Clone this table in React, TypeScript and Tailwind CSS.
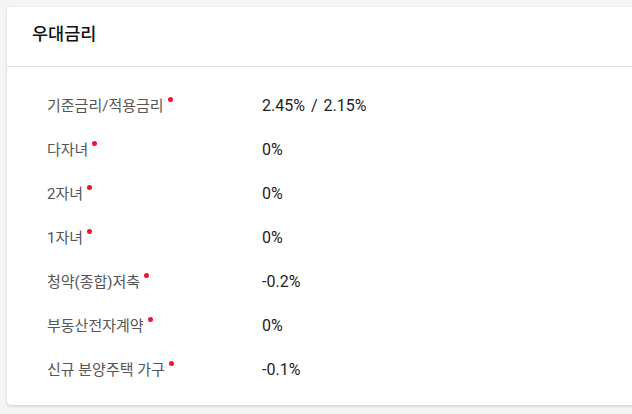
const rows = [
  { label: '기준금리/적용금리', value: ['2.45%', '2.15%'] },
  { label: '다자녀', value: ['0%'] },
  { label: '2자녀', value: ['0%'] },
  { label: '1자녀', value: ['0%'] },
  { label: '청약(종합)저축', value: ['-0.2%'] },
  { label: '부동산전자계약', value: ['0%'] },
  { label: '신규 분양주택 가구', value: ['-0.1%'] },
];

export default function App() {
  return (
    <div
      className="w-[632px] h-[414px] bg-[#f5f5f5] pt-[7px] pl-[7px] overflow-hidden"
      style={{ fontFamily: 'Roboto, "Noto Sans CJK KR", sans-serif' }}
    >
      <div className="w-[640px] h-[398px] bg-white rounded-[4px] shadow-[0_1px_3px_rgba(0,0,0,0.18)]">
        {/* Header */}
        <div className="h-[60px] px-[25px] pb-[5px] flex items-center border-b border-[#e0e0e0]">
          <h2 className="text-[17.5px] font-medium text-[#111]">우대금리</h2>
        </div>

        {/* Rows */}
        <div className="pt-[17px] pl-[40px]">
          {rows.map((row) => (
            <div key={row.label} className="h-[44px] flex items-center">
              <div className="w-[215px] flex items-start text-[15px] text-[#555]">
                <span>{row.label}</span>
                <span className="ml-[4px] mt-[2px] w-[5px] h-[5px] rounded-full bg-[#f0142f]" />
              </div>
              <div className="text-[16px] text-[#222] flex items-center">
                <span>{row.value[0]}</span>
                {row.value[1] && (
                  <>
                    <span className="mx-[6px]">/</span>
                    <span>{row.value[1]}</span>
                  </>
                )}
              </div>
            </div>
          ))}
        </div>
      </div>
    </div>
  );
}
